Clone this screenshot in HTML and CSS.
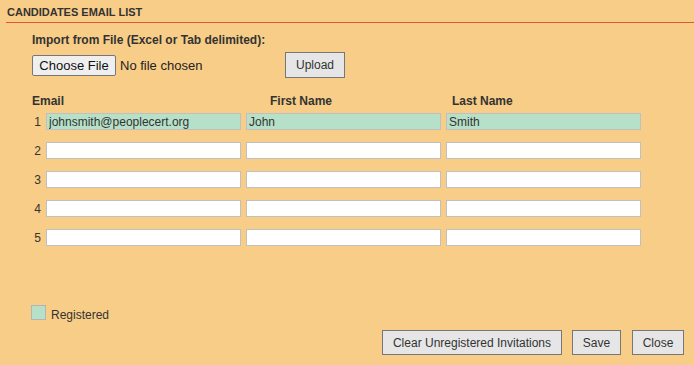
FILE: index.html
```html
<!DOCTYPE HTML>
<html lang="en">
<head>
    <meta charset="UTF-8">
    <meta name="viewport" content="width=device-width, initial-scale=1.0">
    <title>Candidates Email List</title>
    <link rel="stylesheet" href="styles.css">
</head>
<body>
    <div class="panel">
        <h3 class="panel-title">Candidates Email List</h3>

        <div class="import">
            <div class="import-label">Import from File (Excel or Tab delimited):</div>
            <div class="import-row">
                <span class="file-btn">Choose File</span>
                <span class="file-name">No file chosen</span>
                <button class="btn btn-upload">Upload</button>
            </div>
        </div>

        <div class="list-head">
            <span>Email</span>
            <span>First Name</span>
            <span>Last Name</span>
        </div>

        <div class="list">
            <span class="num">1</span>
            <input class="field registered" type="text" value="johnsmith@peoplecert.org">
            <input class="field registered" type="text" value="John">
            <input class="field registered" type="text" value="Smith">

            <span class="num">2</span>
            <input class="field" type="text">
            <input class="field" type="text">
            <input class="field" type="text">

            <span class="num">3</span>
            <input class="field" type="text">
            <input class="field" type="text">
            <input class="field" type="text">

            <span class="num">4</span>
            <input class="field" type="text">
            <input class="field" type="text">
            <input class="field" type="text">

            <span class="num">5</span>
            <input class="field" type="text">
            <input class="field" type="text">
            <input class="field" type="text">
        </div>

        <div class="legend">
            <span class="legend-box"></span>
            <span>Registered</span>
        </div>

        <div class="actions">
            <button class="btn btn-clear">Clear Unregistered Invitations</button>
            <button class="btn btn-save">Save</button>
            <button class="btn btn-close">Close</button>
        </div>
    </div>
</body>
</html>
```

FILE: styles.css
```css
html, body {
    margin: 0;
    padding: 0;
}

body {
    background-color: #f8cd87;
    color: #333;
    font-family: "Liberation Sans", Arial, sans-serif;
    font-size: 12px;
}

.panel {
    height: 365px;
    display: flex;
    flex-direction: column;
    box-sizing: border-box;
}

.panel-title {
    margin: 0 0 0 6px;
    padding: 6px 0 3px 1px;
    font-size: 11px;
    line-height: 13px;
    font-weight: bold;
    text-transform: uppercase;
    color: #333;
    border-bottom: 1px solid #e8572c;
}

.import {
    margin: 10px 0 0 32px;
}

.import-label {
    font-weight: bold;
    line-height: 14px;
}

.import-row {
    display: flex;
    align-items: center;
    margin-top: 5px;
}

.file-btn {
    box-sizing: border-box;
    height: 21px;
    width: 84px;
    display: flex;
    align-items: center;
    justify-content: center;
    background: #efefef;
    border: 1px solid #767676;
    border-radius: 2px;
    font-size: 13px;
    color: #111;
}

.file-name {
    margin-left: 4px;
    width: 165px;
    font-size: 13px;
    color: #222;
}

.btn {
    box-sizing: border-box;
    height: 25px;
    padding: 0;
    background: #e6e6e6;
    border: 1px solid #777;
    border-radius: 0;
    font-family: "Liberation Sans", Arial, sans-serif;
    font-size: 12px;
    color: #333;
    white-space: nowrap;
}

.btn-upload {
    width: 60px;
    height: 26px;
}

.list-head {
    display: grid;
    grid-template-columns: 238px 182px auto;
    margin: 16px 0 0 32px;
    font-weight: bold;
    line-height: 14px;
}

.list {
    display: grid;
    grid-template-columns: 9px 195px 195px 195px;
    column-gap: 5px;
    row-gap: 12px;
    margin: 5px 0 0 32px;
    align-items: center;
}

.num {
    text-align: right;
}

.field {
    box-sizing: border-box;
    width: 195px;
    height: 17px;
    margin: 0;
    padding: 0 2px;
    border: 1px solid #c0c0c0;
    background: #fff;
    font-family: "Liberation Sans", Arial, sans-serif;
    font-size: 12px;
    color: #333;
    outline: none;
}

.field.registered {
    background: #b7e0c8;
}

.legend {
    display: flex;
    align-items: center;
    margin: auto 0 0 31px;
}

.legend-box {
    box-sizing: border-box;
    width: 15px;
    height: 15px;
    background: #b7e0c8;
    border: 1px solid #b4b4b4;
    margin-right: 5px;
    position: relative;
    top: -2px;
}

.actions {
    display: flex;
    justify-content: flex-end;
    gap: 10px;
    margin: 8px 10px 10px 0;
}

.btn-clear {
    width: 180px;
}

.btn-save {
    width: 49px;
}

.btn-close {
    width: 52px;
    margin-left: 1px;
}
```
